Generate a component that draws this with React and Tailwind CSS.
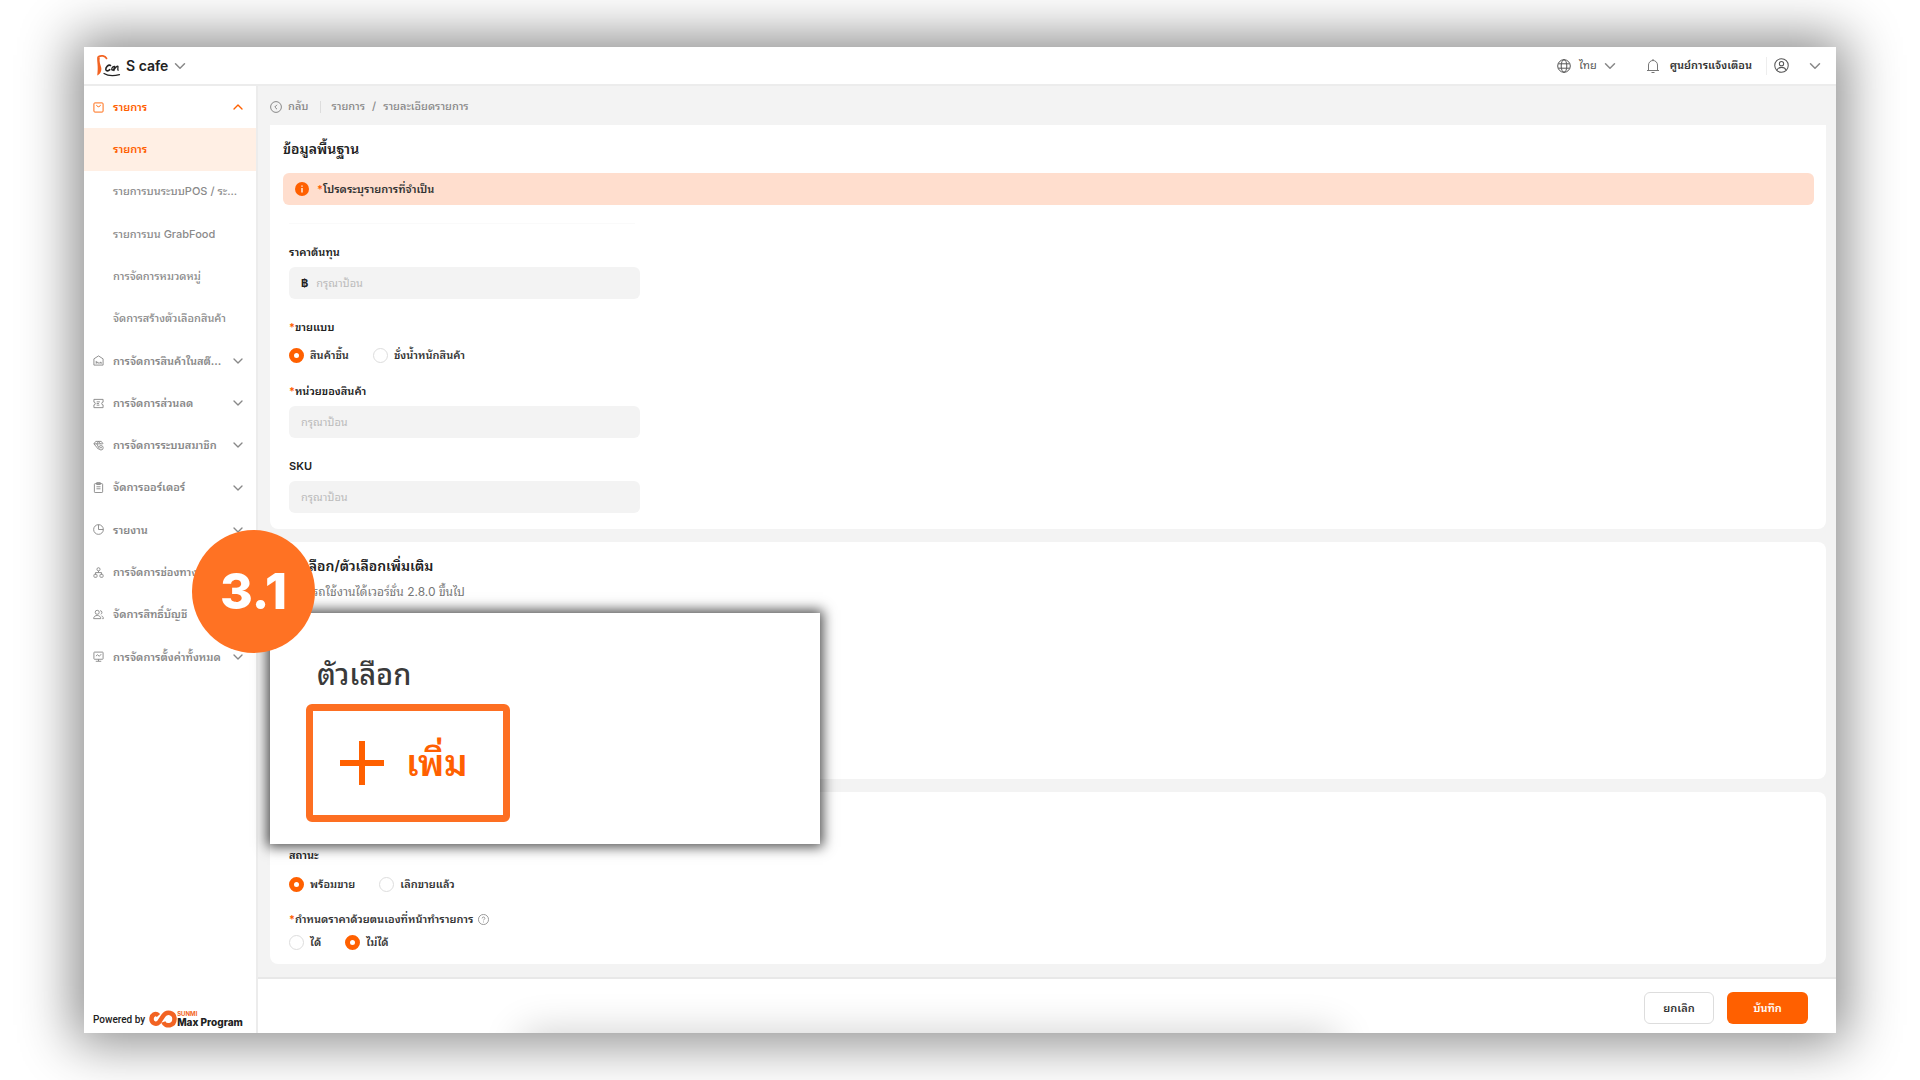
import React, { useState } from 'react';
import { ChevronDown, ChevronUp } from 'lucide-react';

const iconPaths = {
  menu: (
    <>
      <rect x="1" y="1" width="10" height="10" rx="1" />
      <path d="M4 3.2c0 2.6 4 2.6 4 0" />
    </>
  ),
  stock: (
    <>
      <path d="M1 11V4.2L6 1l5 3.2V11z" />
      <path d="M3.5 9.5v-3M3.5 8h2.2v1.5M7.5 9.5V8H9v1.5" />
    </>
  ),
  discount: (
    <>
      <path d="M1 1.5h10v3a1.5 1.5 0 0 0 0 3v3H1v-3a1.5 1.5 0 0 0 0-3z" />
      <path d="M4 4.2h3.5M4 6h2.5M4 7.8h3" />
    </>
  ),
  member: (
    <>
      <path d="M3 1.5h6l2 2.7M3 1.5L1 4.2l5 6M1 4.2h9.5M4.2 4.2L6 8M6 1.5L4.2 4.2M6 1.5l2 2.7" />
      <circle cx="8.7" cy="8.5" r="2.4" />
      <path d="M7.6 8.4h2.2" />
    </>
  ),
  order: (
    <>
      <rect x="1.5" y="1.8" width="9" height="9.7" rx="0.8" />
      <path d="M4 .7h4v2H4zM3.8 5.2h4.4M3.8 7.4h4.4" />
    </>
  ),
  report: (
    <>
      <circle cx="6" cy="6" r="5.3" />
      <path d="M6 .7V6h5.3" />
    </>
  ),
  channel: (
    <>
      <circle cx="6" cy="2.5" r="1.7" />
      <rect x="1" y="8" width="3.4" height="3.2" rx="0.8" />
      <rect x="7.6" y="8" width="3.4" height="3.2" rx="0.8" />
      <path d="M6 4.2v1.9M2.7 8V6.1h6.6V8" />
    </>
  ),
  users: (
    <>
      <circle cx="4.6" cy="3.6" r="2.2" />
      <path d="M.7 10.5c0-4.6 7.8-4.6 7.8 0zM7.8 1.8a2 2 0 0 1 .6 3.9M9.3 7.5c1.3.4 2 1.5 2 3h-1.2" />
    </>
  ),
  settings: (
    <>
      <rect x="1" y="1.2" width="10" height="7.8" rx="0.6" />
      <path d="M3.2 5.6l1.8-1.6 1.8 1.8L9 3.4M6 9v2M3 11.2h6" />
    </>
  ),
};

const menuItems = [
  { label: 'รายการ', icon: 'menu', arrow: 'up', state: 'open' },
  { label: 'รายการ', state: 'active' },
  { label: 'รายการบนระบบPOS / ระ...' },
  { label: 'รายการบน GrabFood' },
  { label: 'การจัดการหมวดหมู่' },
  { label: 'จัดการสร้างตัวเลือกสินค้า' },
  { label: 'การจัดการสินค้าในสต๊...', icon: 'stock', arrow: 'down' },
  { label: 'การจัดการส่วนลด', icon: 'discount', arrow: 'down' },
  { label: 'การจัดการระบบสมาชิก', icon: 'member', arrow: 'down' },
  { label: 'จัดการออร์เดอร์', icon: 'order', arrow: 'down' },
  { label: 'รายงาน', icon: 'report', arrow: 'down' },
  { label: 'การจัดการช่องทาง', icon: 'channel', arrow: 'down' },
  { label: 'จัดการสิทธิ์บัญชี', icon: 'users', arrow: 'down' },
  { label: 'การจัดการตั้งค่าทั้งหมด', icon: 'settings', arrow: 'down' },
];

function MenuIcon({ name }) {
  return (
    <svg viewBox="0 0 12 12" className="w-[11px] h-[11px] shrink-0" fill="none" stroke="currentColor" strokeWidth="1">
      {iconPaths[name]}
    </svg>
  );
}

function Header() {
  return (
    <header className="h-[39px] shrink-0 bg-white border-b-2 border-[#ececec] flex items-center justify-between px-3">
      <button type="button" className="flex items-center text-[#222]">
        <svg viewBox="0 0 26 24" className="w-[26px] h-6 mr-1" fill="none" strokeLinecap="round" strokeLinejoin="round">
          <path d="M10.5 4.4C9 1.6 5 1.2 2.4 2.8" stroke="#f26322" strokeWidth="1.8" />
          <path d="M1.2 3C.8 8 2.6 12 1.2 21.5C4 20.5 6 17 5.2 13.5C4.4 10.500 3 8 3.8 3.500z" fill="#f26322" />
          <path d="M14.500 11.500c-2-1.400-4.900 1.600-4.700 4 .3 2.200 2.700 1.400 4 .2" stroke="#222" strokeWidth="1.600" />
          <path d="M18.200 12.500c-2 0-3.200 2.800-2 3.600 1.200.2 2.200-1.800 2.500-3.600l-.7 4M18.300 15.500c1-1.800 2.800-3.700 3.600-3.200 .4.800-.6 2.600.2 4" stroke="#222" strokeWidth="1.300" />
          <path d="M8 19.500c4 2.500 10 2.500 15.500 1.200" stroke="#222" strokeWidth="1.200" />
        </svg>
        <span className="text-sm font-semibold">S cafe</span>
        <ChevronDown className="w-[18px] h-[18px] ml-[3px] text-[#888]" />
      </button>
      <div className="flex items-center text-[11px] text-[#555]">
        <button type="button" className="flex items-center">
          <svg viewBox="0 0 14 14" className="w-[14px] h-[14px] mr-2" fill="none" stroke="currentColor">
            <circle cx="7" cy="7" r="6.3" />
            <ellipse cx="7" cy="7" rx="2.8" ry="6.3" />
            <path d="M1.3 4.8h11.4M1.3 9.2h11.4" />
          </svg>
          ไทย
          <ChevronDown className="w-[18px] h-[18px] ml-1 text-[#888]" />
        </button>
        <button type="button" className="flex items-center ml-[27px] text-[#333] font-semibold">
          <svg viewBox="0 0 14 16" className="w-[14px] h-4 mr-[10px] text-[#777]" fill="none" stroke="currentColor">
            <path d="M1 12.5h12M2.5 12.5V7a4.5 4.5 0 0 1 9 0v5.5M7 2.5V1M5.5 14.5h3" />
          </svg>
          ศูนย์การแจ้งเตือน
        </button>
        <button type="button" aria-label="บัญชีผู้ใช้" className="flex items-center ml-[14px] pl-[7px] border-l border-[#eee]">
          <svg viewBox="0 0 16 16" className="w-[15px] h-[15px]" fill="none" stroke="currentColor" strokeWidth="1.1">
            <circle cx="8" cy="8" r="7.2" />
            <circle cx="8" cy="6" r="2.3" />
            <path d="M3.2 13c1.5-4 8.1-4 9.6 0" />
          </svg>
          <ChevronDown className="w-[18px] h-[18px] ml-[17px] text-[#888]" />
        </button>
      </div>
    </header>
  );
}

function Sidebar() {
  return (
    <aside className="w-[174px] shrink-0 bg-white border-r-2 border-[#ececec] flex flex-col justify-between">
      <nav className="grid auto-rows-fr h-[592px]">
        {menuItems.map((item, i) => (
          <button
            key={i}
            type="button"
            className={`flex items-center pl-[9px] pr-[10px] text-[11px] whitespace-nowrap ${
              item.state === 'active'
                ? 'bg-[#ffefe4] text-[#ff6000] font-semibold'
                : item.state === 'open'
                  ? 'text-[#ff6000] font-semibold'
                  : item.icon
                    ? 'text-[#888] font-semibold'
                    : 'text-[#8a8a8a] font-medium'
            }`}
          >
            <span className="w-5 shrink-0">{item.icon && <MenuIcon name={item.icon} />}</span>
            <span className="flex-1 text-left">{item.label}</span>
            {item.arrow === 'up' && <ChevronUp className="w-4 h-4" />}
            {item.arrow === 'down' && <ChevronDown className="w-4 h-4" />}
          </button>
        ))}
      </nav>
      <div className="flex items-center pl-[9px] pb-[5px] text-[10px] text-[#222] whitespace-nowrap">
        <span className="font-[Roboto] font-medium">Powered by</span>
        <svg viewBox="0 0 28 18" className="w-7 h-[18px] ml-1" fill="none" stroke="#f26322" strokeWidth="4.5">
          <path d="M9.5 5.5C6.5 2.2 2.5 5 2.5 9s4.5 6.5 7.5 3.2l4.5-6.7C17.5 1 25.5 2 25.5 9s-9 8.5-11.2 3" />
        </svg>
        <span className="flex flex-col">
          <span className="text-[6px] leading-[6px] text-[#f26322] font-bold">SUNMI</span>
          <span className="text-[10px] leading-[10px] font-extrabold">Max Program</span>
        </span>
      </div>
    </aside>
  );
}

function Radio({ name, label, checked, onChange }) {
  return (
    <label className="flex items-center gap-[6px] text-[11px] font-semibold text-[#333]">
      <input
        type="radio"
        name={name}
        checked={checked}
        onChange={onChange}
        className="appearance-none w-[15px] h-[15px] rounded-full border border-[#ddd] bg-white checked:border-[5px] checked:border-[#ff6000]"
      />
      {label}
    </label>
  );
}

function RadioGroup({ name, options, initial }) {
  const [value, setValue] = useState(initial);
  return (
    <div className="flex items-center gap-6 h-4">
      {options.map((o) => (
        <Radio key={o} name={name} label={o} checked={value === o} onChange={() => setValue(o)} />
      ))}
    </div>
  );
}

function Field({ id, label, required, prefix }) {
  return (
    <div className="w-[351px]">
      <label htmlFor={id} className="block h-4 mb-[7px] text-[11px] leading-4 font-semibold text-[#222]">
        {required && <span className="text-[#ff6000]">*</span>}
        {label}
      </label>
      <div className="h-8 flex items-center gap-2 px-3 rounded-md bg-[#f3f3f3] text-[11px]">
        {prefix && <span className="font-bold text-[#222]">{prefix}</span>}
        <input id={id} type="text" placeholder="กรุณาป้อน" className="flex-1 bg-transparent outline-none placeholder:text-[#bbb]" />
      </div>
    </div>
  );
}

function Popup() {
  return (
    <div className="absolute left-[186px] top-[566px] w-[550px] h-[231px] bg-white pl-9 pt-10 shadow-[0_0_12px_3px_rgba(0,0,0,0.7)]">
      <h3 className="pl-[11px] text-[29px] leading-[44px] font-medium text-[#3a3a3a]">ตัวเลือก</h3>
      <button type="button" className="mt-[7px] w-[204px] h-[118px] flex items-center pl-[27px] gap-[22px] border-[7px] border-[#fd6f22] rounded-md text-[#ff6000] text-4xl font-semibold">
        <svg viewBox="0 0 44 44" className="w-11 h-11" stroke="currentColor" strokeWidth="6">
          <path d="M22 0v44M0 22h44" />
        </svg>
        เพิ่ม
      </button>
    </div>
  );
}

function App() {
  return (
    <div className="min-h-screen flex bg-white px-[84px] py-[47px] font-[Inter,'Noto_Sans_Thai_Looped',Loma,Waree,Garuda,'Noto_Sans_Thai','Noto_Sans',sans-serif]">
      <div className="relative flex-1 flex flex-col shadow-[0_0_50px_10px_rgba(0,0,0,0.46)]">
        <Header />
        <div className="flex-1 flex">
          <Sidebar />
          <div className="flex-1 min-w-0 flex flex-col bg-[#f3f3f3]">
            <nav className="h-[39px] flex items-center pl-3 pt-[2px] text-[11px] font-medium text-[#888]">
              <button type="button" className="flex items-center">
                <svg viewBox="0 0 12 12" className="w-3 h-3 mr-[6px]" fill="none" stroke="currentColor">
                  <circle cx="6" cy="6" r="5.4" />
                  <path d="M7 3.8L4.8 6 7 8.2" />
                </svg>
                กลับ
              </button>
              <span className="h-3 ml-3 mr-[10px] border-l border-[#ddd]" />
              <a href="#items">รายการ</a>
              <span className="mx-[7px]">/</span>
              <span>รายละเอียดรายการ</span>
            </nav>

            <main className="flex-1 flex flex-col gap-[13px] pl-3 pr-[10px] pb-[13px]">
              <section className="h-[404px] bg-white rounded-b-lg pl-[13px] pr-3 pt-3">
                <h2 className="text-sm leading-6 font-semibold text-[#222]">ข้อมูลพื้นฐาน</h2>
                <div className="h-8 mt-3 flex items-center pl-3 rounded-md bg-[#ffdece] text-[11px] font-semibold text-[#333]">
                  <svg viewBox="0 0 14 14" className="w-[14px] h-[14px] mr-2">
                    <circle cx="7" cy="7" r="7" fill="#ff6000" />
                    <path d="M7 6v4.5M7 3.5v1.3" stroke="#fff" strokeWidth="1.3" />
                  </svg>
                  <span className="text-[#ff6000]">*</span>
                  โปรดระบุรายการที่จำเป็น
                </div>
                <div className="px-[6px] pt-[18px]">
                  <div className="w-[346px] mb-5 border-t border-[#fafafa]" />
                  <Field id="cost" label="ราคาต้นทุน" prefix="฿" />
                  <p className="mt-5 mb-3 text-[11px] leading-4 font-semibold text-[#222]">
                    <span className="text-[#ff6000]">*</span>ขายแบบ
                  </p>
                  <RadioGroup name="sell" options={['สินค้าชิ้น', 'ชั่งน้ำหนักสินค้า']} initial="สินค้าชิ้น" />
                  <div className="mt-5 flex flex-col gap-5">
                    <Field id="unit" label="หน่วยของสินค้า" required />
                    <Field id="sku" label="SKU" />
                  </div>
                </div>
              </section>

              <section className="h-[237px] bg-white rounded-lg px-[18px] pt-3">
                <h2 className="text-sm leading-6 font-semibold text-[#222]">ตัวเลือก/ตัวเลือกเพิ่มเติม</h2>
                <p className="mt-[6px] text-xs leading-4 text-[#777]">สามารถใช้งานได้เวอร์ชั่น 2.8.0 ขึ้นไป</p>
              </section>

              <section className="flex-1 bg-white rounded-lg px-[19px] pt-[55px]">
                <p className="mb-[13px] text-[11px] leading-4 font-semibold text-[#222]">สถานะ</p>
                <RadioGroup name="status" options={['พร้อมขาย', 'เลิกขายแล้ว']} initial="พร้อมขาย" />
                <p className="mt-[19px] mb-[7px] flex items-center text-[11px] leading-4 font-semibold text-[#333]">
                  <span className="text-[#ff6000]">*</span>
                  กำหนดราคาด้วยตนเองที่หน้าทำรายการ
                  <svg viewBox="0 0 12 12" className="w-[11px] h-[11px] ml-[5px] text-[#888]" fill="none" stroke="currentColor" strokeWidth="0.9">
                    <circle cx="6" cy="6" r="5.5" />
                    <path d="M4.5 4.8c0-2 3-2 3 0 0 1-1.5 1-1.5 2.2M6 8.2v1" />
                  </svg>
                </p>
                <RadioGroup name="manual" options={['ได้', 'ไม่ได้']} initial="ไม่ได้" />
              </section>
            </main>

            <footer className="relative overflow-hidden h-14 bg-white border-t-2 border-[#e8e8e8] flex items-start justify-end gap-[13px] pt-[13px] pr-7 text-[11px] font-semibold">
              <div className="absolute top-full left-[265px] right-[500px] h-10 shadow-[0_0_40px_rgba(0,0,0,0.2)]" />
              <button type="button" className="w-[70px] h-8 rounded-md border border-[#ddd] text-[#333]">ยกเลิก</button>
              <button type="button" className="w-[81px] h-8 rounded-md bg-[#ff6000] text-white">บันทึก</button>
            </footer>
          </div>
        </div>

        <Popup />
        <div className="absolute left-[108px] top-[483px] w-[123px] h-[123px] rounded-full bg-[#ff7223] flex items-center justify-center text-white text-[50px] font-extrabold">
          3.1
        </div>
      </div>
    </div>
  );
}

export default App;
